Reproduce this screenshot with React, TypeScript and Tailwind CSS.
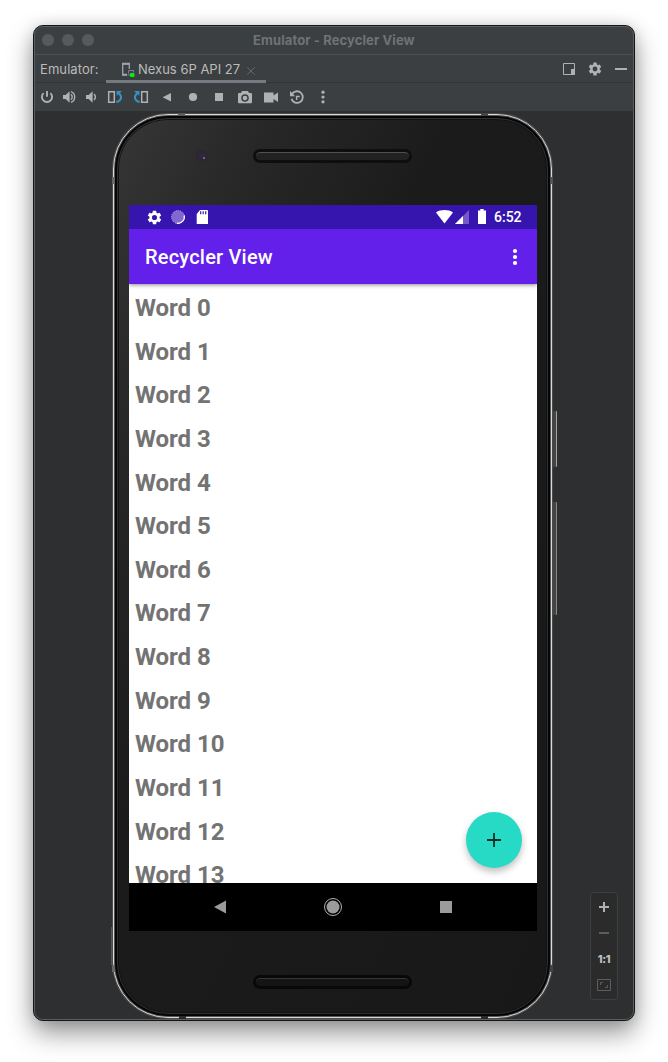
import React from "react";

const words = Array.from({ length: 14 }, (_, i) => `Word ${i}`);

const GEAR =
  "M19.14 12.94c.04-.3.06-.61.06-.94 0-.32-.02-.64-.07-.94l2.03-1.58a.49.49 0 0 0 .12-.61l-1.92-3.32a.488.488 0 0 0-.59-.22l-2.39.96c-.5-.38-1.03-.7-1.62-.94l-.36-2.54a.484.484 0 0 0-.48-.41h-3.84c-.24 0-.43.17-.47.41l-.36 2.54c-.59.24-1.13.57-1.62.94l-2.39-.96c-.22-.08-.47 0-.59.22L2.74 8.87c-.12.21-.08.47.12.61l2.03 1.58c-.05.3-.09.63-.09.94s.02.64.07.94l-2.03 1.58a.49.49 0 0 0-.12.61l1.92 3.32c.12.22.37.29.59.22l2.39-.96c.5.38 1.03.7 1.62.94l.36 2.54c.05.24.24.41.48.41h3.84c.24 0 .44-.17.47-.41l.36-2.54c.59-.24 1.13-.56 1.62-.94l2.39.96c.22.08.47 0 .59-.22l1.92-3.32c.12-.22.07-.47-.12-.61l-2.01-1.58zM12 15.6A3.6 3.6 0 1 1 12 8.4a3.6 3.6 0 0 1 0 7.2z";

function Tool({ wide, children }: { wide?: boolean; children: React.ReactNode }) {
  return (
    <div className={wide ? "flex w-[26px] justify-center" : "flex w-[22px] justify-center"}>
      <svg width="16" height="16" viewBox="0 0 16 16" fill="#afb1b3" className="shrink-0">
        {children}
      </svg>
    </div>
  );
}

function Toolbar() {
  return (
    <div className="flex h-[28px] shrink-0 items-center bg-[#3c3f41] pl-[2px]">
      <Tool>
        <path d="M8 2v5.8M4.6 4.1a5.1 5.1 0 1 0 6.8 0" fill="none" stroke="#afb1b3" strokeWidth="1.9" />
      </Tool>
      <Tool>
        <path d="M2 6h2.600L8.600 2.200v11.600L4.600 10H2z" />
        <path d="M9.800 5.400c1.900 1.200 1.900 4 0 5.200M10 2.700c4.900 1.700 4.900 8.900 0 10.600" fill="none" stroke="#afb1b3" strokeWidth="1.400" />
      </Tool>
      <Tool>
        <path d="M3 6h2.600L9.600 2.200v11.600L5.600 10H3z" />
        <path d="M10.900 5.200c2 1.200 2 4.400 0 5.600" fill="none" stroke="#afb1b3" strokeWidth="1.500" />
      </Tool>
      <Tool wide>
        <path d="M1.700 2.700h5.600v10.600H1.700z" fill="none" stroke="#afb1b3" strokeWidth="1.500" />
        <path d="M9.300 13c5.400-.8 5.900-5.700 2.800-8.600" fill="none" stroke="#3592c4" strokeWidth="2" />
        <path d="M9.600 2h5.400l-5.400 5z" fill="#3592c4" />
      </Tool>
      <Tool wide>
        <path d="M8.700 2.700h5.600v10.600H8.700z" fill="none" stroke="#afb1b3" strokeWidth="1.500" />
        <path d="M6.700 13C1.300 12.200.8 7.300 3.900 4.400" fill="none" stroke="#3592c4" strokeWidth="2" />
        <path d="M6.400 2H1l5.400 5z" fill="#3592c4" />
      </Tool>
      <Tool wide>
        <path d="M12 4v8.400L3.600 8.200z" />
      </Tool>
      <Tool wide>
        <circle cx="8" cy="8" r="4.100" />
      </Tool>
      <Tool wide>
        <path d="M4 4h8v8H4z" />
      </Tool>
      <Tool wide>
        <path fillRule="evenodd" d="M5 2h6l1 2h2a1 1 0 0 1 1 1v8.200a1 1 0 0 1-1 1H2a1 1 0 0 1-1-1V5a1 1 0 0 1 1-1h2zM8 5.200a3.800 3.800 0 1 0 0 7.600 3.800 3.800 0 0 0 0-7.600z" />
        <circle cx="8" cy="9" r="2.300" />
      </Tool>
      <Tool wide>
        <path d="M1 3.500h9.500v3L15 3.500v9.500l-4.500-3v3.500H1z" />
      </Tool>
      <Tool wide>
        <path d="M2.900 5.300a5.800 5.800 0 1 1-.4 4.600" fill="none" stroke="#afb1b3" strokeWidth="1.800" />
        <path d="M1 2v5.200h5.200z" />
        <path d="M7.600 11V7.500h3.200" fill="none" stroke="#afb1b3" strokeWidth="1.400" />
      </Tool>
      <Tool wide>
        <circle cx="8" cy="3.200" r="1.600" />
        <circle cx="8" cy="8" r="1.600" />
        <circle cx="8" cy="12.800" r="1.600" />
      </Tool>
    </div>
  );
}

function TabRow() {
  return (
    <div className="flex h-[28px] shrink-0 border-b border-[#323437] bg-[#3c3f41] pl-[6px] text-[13px] text-[#bbbbbb]">
      <span className="w-[66px] pt-[4px] leading-[20px] tracking-[0.08px]">Emulator:</span>
      <div className="flex h-[28px] w-[160px] items-start border-b-[3px] border-[#747a80] pl-[14px]">
        <svg width="16" height="16" viewBox="0 0 16 16" fill="none" className="mt-[7px]">
          <path d="M9.300 7V2H2.700v10.500H7" stroke="#9aa7b0" strokeWidth="1.300" />
          <path d="M2 1.700h8M2 12.800h5" stroke="#9aa7b0" strokeWidth="1.700" />
          <path d="M8.500 11.500V8.500h5v2M7.500 13h2.500" stroke="#8a75a8" strokeWidth="1" />
          <rect x="10" y="11" width="4.500" height="4" rx="1" fill="#00f400" />
        </svg>
        <span className="ml-[2px] w-[106px] shrink-0 whitespace-nowrap pt-[4px] leading-[20px]">Nexus 6P API 27</span>
        <svg width="12" height="12" viewBox="0 0 12 12" className="ml-px mt-[10px] shrink-0">
          <path d="M2.200 2.200l7.600 7.600M9.800 2.200l-7.600 7.600" stroke="#64676a" strokeWidth="1" />
        </svg>
      </div>
      <div className="ml-auto flex gap-[10px] pr-[5px] pt-[6px]">
        <svg width="16" height="16" viewBox="0 0 16 16" fill="#afb1b3">
          <path d="M2.500 2.500h11v11h-11z" fill="none" stroke="#afb1b3" />
          <path d="M10 8H14V14H10z" />
        </svg>
        <svg width="16" height="16" viewBox="0 0 24 24" fill="#afb1b3">
          <path d={GEAR} />
        </svg>
        <svg width="16" height="16" viewBox="0 0 16 16">
          <path d="M2 7h12v2H2z" fill="#afb1b3" />
        </svg>
      </div>
    </div>
  );
}

function StatusBar() {
  return (
    <div className="flex h-[24px] shrink-0 items-center bg-[#3515ad] pl-[17px] pr-[15px] text-white">
      <svg width="17" height="17" viewBox="0 0 24 24" fill="white">
        <path d={GEAR} />
      </svg>
      <svg width="16" height="16" viewBox="0 0 16 16" className="ml-[7px]">
        <circle cx="8" cy="8" r="6.500" fill="#8268ce" stroke="#b3a2e4" strokeWidth="1" strokeDasharray="1 1" />
        <path d="M14.200 6.500a6.400 6.400 0 0 1-7.500 7.700" fill="none" stroke="white" strokeWidth="1.200" />
      </svg>
      <svg width="12" height="14" viewBox="0 0 12 14" className="ml-[10px]">
        <path d="M4 0h7a1 1 0 0 1 1 1v13H.7V4z" fill="white" />
        <path d="M4.700 1.200v3M7.200 1.200v3M9.700 1.200v3" stroke="#3515ad" strokeWidth="1.200" />
      </svg>
      <svg width="17" height="14" viewBox="0 0 17 14" className="ml-auto">
        <path d="M0 2.400C4.800-.8 12.200-.8 17 2.400L8.500 13.500z" fill="white" />
      </svg>
      <svg width="14" height="14" viewBox="0 0 14 14" className="ml-[2px]">
        <path d="M0 14L14 0v14z" fill="#7757ca" />
        <path d="M0 14L8 6v8z" fill="white" />
      </svg>
      <svg width="8" height="15" viewBox="0 0 8 15" className="ml-[9px] mt-[-1px]">
        <path d="M2.300 0h3.400v1.500H8V15H0V1.500h2.300z" fill="white" />
      </svg>
      <span className="ml-[8px] w-[28px] whitespace-nowrap font-[Roboto,sans-serif] text-[14px] font-medium leading-[25px]">6:52</span>
    </div>
  );
}

function Screen() {
  return (
    <div className="ml-[11px] flex h-[726px] w-[408px] shrink-0 flex-col bg-white font-[Roboto,sans-serif]">
      <StatusBar />
      <div className="z-10 flex h-[55px] shrink-0 items-center bg-[#6220ea] pl-[16px] pr-[16px] text-white shadow-[0_1px_4px_rgba(0,0,0,0.45)] [clip-path:inset(0_0_-10px_0)]">
        <span className="pt-px text-[20px] font-medium leading-[24px] tracking-[0.2px]">Recycler View</span>
        <svg width="12" height="20" viewBox="0 0 12 20" fill="white" className="ml-auto">
          <circle cx="6" cy="4" r="2.100" />
          <circle cx="6" cy="10" r="2.100" />
          <circle cx="6" cy="16" r="2.100" />
        </svg>
      </div>
      <div className="relative min-h-0 flex-1 overflow-hidden">
        <ul>
          {words.map((word) => (
            <li key={word} className="h-[43.65px] pl-[6px] text-[24px] font-bold leading-[49px] tracking-[-0.05px] text-[#737373]">
              {word}
            </li>
          ))}
        </ul>
        <button className="absolute bottom-[15px] right-[15.500px] flex size-[56px] items-center justify-center rounded-full bg-[#27dac5] shadow-[0_4px_7px_rgba(0,0,0,0.25)]">
          <svg width="14" height="14" viewBox="0 0 14 14">
            <path d="M7 0v14M0 7h14" stroke="#08302b" strokeWidth="1.800" />
          </svg>
        </button>
      </div>
      <div className="flex h-[48px] shrink-0 items-center bg-black pl-[85px] pr-[85px]">
        <svg width="12" height="14" viewBox="0 0 12 14">
          <path d="M12 .5v13L0 7z" fill="#9b9b9b" />
        </svg>
        <svg width="20" height="20" viewBox="0 0 20 20" className="mx-auto">
          <circle cx="10" cy="10" r="8.500" fill="none" stroke="#b0b0b0" />
          <circle cx="10" cy="10" r="6.500" fill="#9b9b9b" />
        </svg>
        <div className="size-[12px] bg-[#9b9b9b]" />
      </div>
    </div>
  );
}

function Phone() {
  return (
    <div className="relative ml-[79px] mt-[3px] h-[904px] w-[439px] shrink-0">
      <div className="absolute left-[440px] top-[297px] h-[56px] w-[4px] rounded-r-[1px] border-r border-[#a5a5a5] bg-[#444]" />
      <div className="absolute left-[440px] top-[388px] h-[113px] w-[4px] rounded-r-[1px] border-r border-[#888] bg-[#444]" />
      <div className="absolute left-[-2px] top-[813px] h-[38px] w-px bg-[#545556]" />
      <div className="h-full rounded-[55px] border border-[#dadada] bg-[#050505] p-[3px] shadow-[inset_0_0_0_1px_#555,0_0_0_1px_#494a4b]">
        <div className="flex h-full flex-col items-start rounded-[51px] border border-[#303030] bg-[linear-gradient(115deg,#363636_0%,#272727_18%,#1b1b1b_40%,#181818_100%)] shadow-[inset_0_0_0_1px_#121212]">
          <div className="flex h-[86px] w-full shrink-0 pl-[77px] pt-[30px]">
            <div className="flex size-[14px] items-center justify-center rounded-full bg-[radial-gradient(circle,#302a42_0%,#2a2731_50%,#2c2c2c_75%)]">
              <div className="ml-[4px] mt-[3px] size-[2px] rounded-full bg-[#a46d82]" />
            </div>
            <div className="ml-[44px] h-[14px] w-[159px] rounded-full border-[3px] border-[#0e0e0e] bg-[#222] shadow-[inset_0_1px_0_#505050]" />
          </div>
          <Screen />
          <div className="ml-[135px] mt-[44px] h-[14px] w-[159px] shrink-0 rounded-full border-[3px] border-[#080808] bg-[#141414] shadow-[inset_0_1px_0_#363636]" />
        </div>
      </div>
      <div className="absolute left-[65px] top-[-1px] h-[3px] w-[7px] bg-[#5a5a5a]" />
      <div className="absolute left-[368px] top-[-1px] h-[3px] w-[7px] bg-[#444]" />
      <div className="absolute bottom-[-1px] left-[66px] h-[3px] w-[7px] bg-[#292929]" />
      <div className="absolute bottom-[-1px] left-[368px] h-[3px] w-[7px] bg-[#292929]" />
      <div className="absolute left-[-1px] top-[63px] h-[7px] w-[3px] bg-[#666]" />
      <div className="absolute right-[-1px] top-[63px] h-[7px] w-[3px] bg-[#555]" />
      <div className="absolute left-[-1px] top-[851px] h-[7px] w-[3px] bg-[#666]" />
      <div className="absolute right-[-1px] top-[851px] h-[7px] w-[3px] bg-[#444]" />
    </div>
  );
}

function ZoomPanel() {
  return (
    <div className="ml-[38px] mt-[781px] flex h-[108px] w-[28px] flex-col items-center rounded-[3px] border border-[#3d3f41] bg-[#2b2b2b]">
      <svg width="12" height="12" viewBox="0 0 12 12" className="mt-[8px]">
        <path d="M6 1v10M1 6h10" stroke="#afb1b3" strokeWidth="2" />
      </svg>
      <svg width="12" height="12" viewBox="0 0 12 12" className="mt-[14px]">
        <path d="M1 6h10" stroke="#5c5d5e" strokeWidth="2" />
      </svg>
      <span className="mt-[13px] h-[14px] font-[Inter,sans-serif] text-[11px] font-extrabold leading-[14px] tracking-[-0.4px] text-[#bfc0c1]">1:1</span>
      <svg width="14" height="12" viewBox="0 0 14 12" fill="none" stroke="#5c5d5e" className="mt-[13px]">
        <path d="M.5 .5h13v11H.5z" />
        <path d="M3.500 6V3.500H6M8 8.500h2.500V6" />
      </svg>
    </div>
  );
}

export default function App() {
  return (
    <div className="h-[1062px] w-[668px] overflow-hidden bg-white pl-[33px] pt-[25px] font-[Inter,sans-serif]">
      <div className="h-[996px] w-[602px] rounded-[10px] border border-[#151616] bg-[#3c3f41] shadow-[0_12px_26px_rgba(0,0,0,0.42),0_0_14px_rgba(0,0,0,0.12)]">
        <div className="relative flex h-full flex-col overflow-hidden rounded-[9px]">
          <div className="flex h-[29px] shrink-0 items-center border-b border-[#544e49] bg-[#3c3f41] pl-[8px]">
            <div className="flex gap-[8px]">
              <div className="size-[12px] rounded-full bg-[#58595a]" />
              <div className="size-[12px] rounded-full bg-[#58595a]" />
              <div className="size-[12px] rounded-full bg-[#58595a]" />
            </div>
            <h1 className="ml-[159px] whitespace-nowrap text-[13px] font-bold leading-[20px] tracking-[0.1px] text-[#707274]">Emulator - Recycler View</h1>
          </div>
          <TabRow />
          <Toolbar />
          <div className="flex min-h-0 flex-1 items-start bg-[#2e2f31]">
            <Phone />
            <ZoomPanel />
          </div>
          <div className="pointer-events-none absolute inset-0 rounded-[9px] border border-[#5b5d5f]" />
        </div>
      </div>
    </div>
  );
}
